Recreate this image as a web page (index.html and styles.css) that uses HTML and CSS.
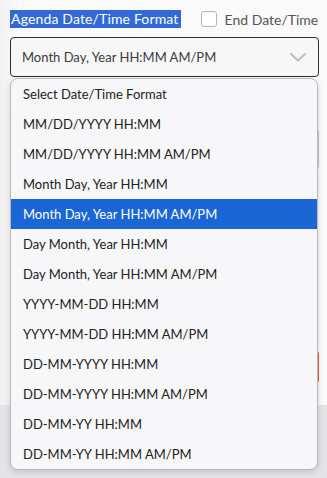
FILE: index.html
```html
<!DOCTYPE html>
<html lang="en">
<head>
<meta charset="UTF-8" />
<meta name="viewport" content="width=device-width, initial-scale=1.0" />
<title>Agenda Date/Time Format</title>
<link rel="stylesheet" href="styles.css">
</head>
<body>

<div class="panel">
  <div class="field-head">
    <span class="field-title">Agenda Date/Time Format</span>
    <label class="check">
      <span class="check-box"></span>
      End Date/Time
    </label>
  </div>

  <!-- Select with open list -->
  <div class="select-wrap">
    <div class="select">
      <span>Month Day, Year HH:MM AM/PM</span>
      <svg class="chevron" width="18" height="12" viewBox="0 0 18 12">
        <path d="M2 3 L9 9.5 L16 3" fill="none" stroke="#bdbdbd" stroke-width="2" stroke-linecap="round" stroke-linejoin="round"/>
      </svg>
    </div>

    <ul class="options">
      <li>Select Date/Time Format</li>
      <li>MM/DD/YYYY HH:MM</li>
      <li>MM/DD/YYYY HH:MM AM/PM</li>
      <li>Month Day, Year HH:MM</li>
      <li class="active">Month Day, Year HH:MM AM/PM</li>
      <li>Day Month, Year HH:MM</li>
      <li>Day Month, Year HH:MM AM/PM</li>
      <li>YYYY-MM-DD HH:MM</li>
      <li>YYYY-MM-DD HH:MM AM/PM</li>
      <li>DD-MM-YYYY HH:MM</li>
      <li>DD-MM-YYYY HH:MM AM/PM</li>
      <li>DD-MM-YY HH:MM</li>
      <li>DD-MM-YY HH:MM AM/PM</li>
    </ul>
  </div>

  <!-- Content under the list -->
  <div class="next-label">A</div>
  <div class="next-input"></div>
  <div class="spacer"></div>
  <div class="save-btn"></div>
</div>
<div class="footer"></div>

</body>
</html>
```

FILE: styles.css
```css
body {
  margin: 0;
  background-color: #e4e4e7;
  font-family: Lato, "Open Sans", sans-serif;
  color: #333;
}

.panel {
  background: linear-gradient(to right, #f1f1f2, #fafafa 20px, #fafafa);
  padding: 10px 8px 0 10px;
  height: 405px;
  box-sizing: border-box;
}

/* Заголовок поля */
.field-head {
  display: flex;
  align-items: center;
  height: 18px;
  white-space: nowrap;
}

.field-title {
  flex-shrink: 0;
  background-color: #3269d5;
  color: #fff;
  font-size: 14px;
  letter-spacing: 0.15px;
  line-height: 18px;
  padding: 0 2px 0 1px;
}

.check {
  display: flex;
  align-items: center;
  gap: 8px;
  margin-left: 20px;
  font-size: 14px;
  color: #555;
}

.check-box {
  flex-shrink: 0;
  width: 14px;
  height: 14px;
  border: 1px solid #b5b5b5;
  border-radius: 3px;
  background: #fff;
}

.select-wrap {
  position: relative;
  margin-top: 9px;
}

.select {
  display: flex;
  align-items: center;
  justify-content: space-between;
  height: 38px;
  border: 1px solid #2e2e2e;
  border-radius: 4px;
  padding: 0 11px 0 11px;
  background: #f7f7f8;
  font-size: 13px;
  color: #3a3a3a;
}

/* Выпадающий список */
.options {
  position: absolute;
  left: 0;
  top: 41px;
  width: 308px;
  margin: 0;
  padding: 0;
  list-style: none;
  background: #f7f7f9;
  border: 1px solid #b9b9bd;
  border-radius: 8px;
  box-shadow: 0 2px 6px rgba(0,0,0,0.15);
  overflow: hidden;
  box-sizing: border-box;
  z-index: 10;
}

.options li {
  height: 30px;
  line-height: 30px;
  padding-left: 12px;
  font-size: 13px;
  color: #222;
}

.options li.active {
  background-color: #1a66d4;
  color: #fff;
}

.next-label {
  margin-top: 24px;
  height: 15px;
  font-size: 12px;
  color: #b07030;
}

.next-input {
  margin-top: 12px;
  height: 40px;
  border: 1px solid #c8c8c8;
  border-radius: 4px;
  background: #fff;
}

.spacer {
  height: 180px;
}

.save-btn {
  height: 32px;
  border: 1px solid #e8642c;
  border-radius: 4px;
  background: #ee6a30;
}

.footer {
  height: 73px;
}
```
